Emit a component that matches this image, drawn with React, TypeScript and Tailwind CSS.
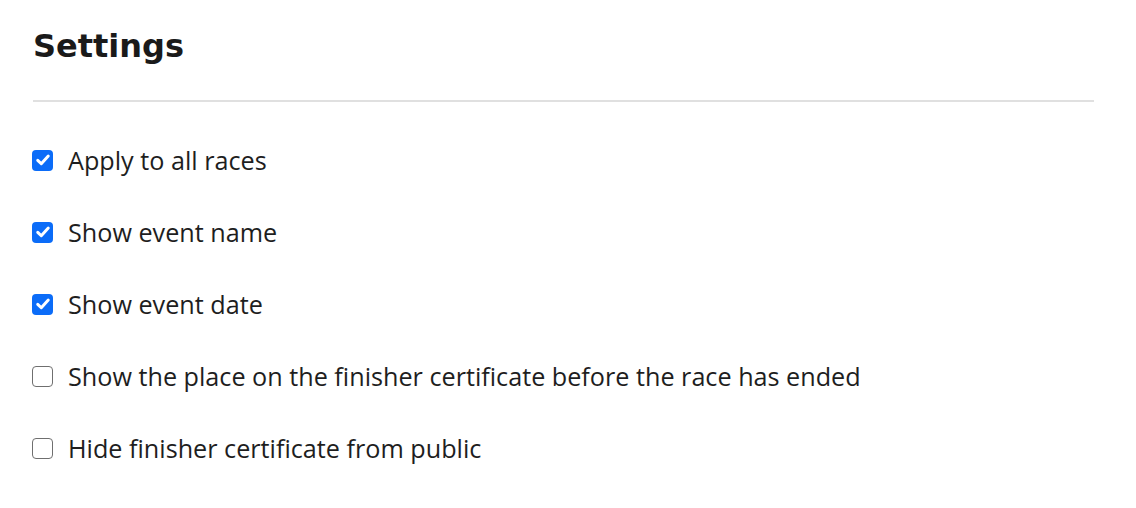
const ITEMS = [
  { label: "Apply to all races", checked: true },
  { label: "Show event name", checked: true },
  { label: "Show event date", checked: true },
  { label: "Show the place on the finisher certificate before the race has ended", checked: false },
  { label: "Hide finisher certificate from public", checked: false },
];

function Box({ checked }: { checked: boolean }) {
  if (checked) {
    return (
      <span className="flex h-[21px] w-[21px] shrink-0 items-center justify-center rounded-[4px] bg-[#0b6cf8]">
        <svg width="16" height="16" viewBox="0 0 14 14" fill="none">
          <path d="M2.4 7.3 5.5 10.3 11.6 3.6" stroke="white" strokeWidth="2.6" strokeLinecap="round" strokeLinejoin="round" />
        </svg>
      </span>
    );
  }
  return <span className="h-[21px] w-[21px] shrink-0 rounded-[4px] border-[1.5px] border-[#6f6f6f] bg-white" />;
}

export default function App() {
  return (
    <div className="h-[508px] w-[1136px] bg-white pr-[42px] pl-[32px] pt-[24px] font-['Open_Sans',sans-serif] text-[#1e1e1e]">
      {/* Heading */}
      <h1 className="pl-px font-['DejaVu_Sans',sans-serif] text-[32px] leading-[44px] font-bold text-[#1a1a1a]">
        Settings
      </h1>
      <div className="mt-[32px] ml-px h-[2px] bg-[#e0e0e0]" />

      {/* Options */}
      <div className="mt-[42px] flex flex-col gap-[40px]">
        {ITEMS.map((item) => (
          <label key={item.label} className="flex h-[32px] items-center gap-[15px]">
            <Box checked={item.checked} />
            <span className="text-[25.2px] leading-[32px]">{item.label}</span>
          </label>
        ))}
      </div>
    </div>
  );
}
